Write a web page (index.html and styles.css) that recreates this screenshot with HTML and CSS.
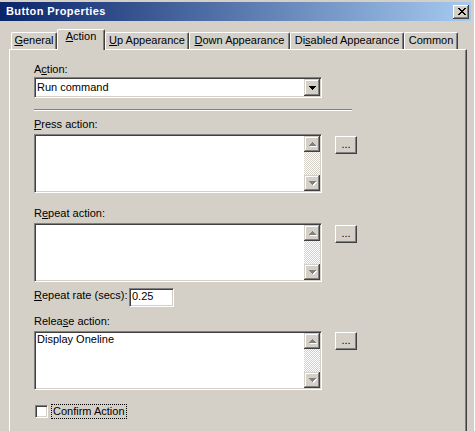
FILE: index.html
```html
<!DOCTYPE html>
<html>
<head>
<meta charset="utf-8">
<title>Button Properties</title>
<link rel="stylesheet" href="styles.css">
</head>
<body>
<div class="window">
  <div class="titlebar">
    <span class="title">Button Properties</span>
    <span class="close-btn">
      <svg width="8" height="7" viewBox="0 0 8 7" shape-rendering="crispEdges"><path fill="#000" d="M0 0h2v1H0zM6 0h2v1H6zM1 1h2v1H1zM5 1h2v1H5zM2 2h4v1H2zM3 3h2v1H3zM2 4h4v1H2zM1 5h2v1H1zM5 5h2v1H5zM0 6h2v1H0zM6 6h2v1H6z"/></svg>
    </span>
  </div>

  <div class="tabs">
    <div class="tab tab-general"><u>G</u>eneral</div>
    <div class="tab tab-action active"><u>A</u>ction</div>
    <div class="tab tab-up"><u>U</u>p Appearance</div>
    <div class="tab tab-down"><u>D</u>own Appearance</div>
    <div class="tab tab-disabled">Di<u>s</u>abled Appearance</div>
    <div class="tab tab-common">Common</div>
  </div>

  <div class="panel">
    <div class="label label-first">A<u>c</u>tion:</div>
    <div class="combo">
      <span class="combo-text">Run command</span>
      <span class="combo-btn">
        <svg width="7" height="4" viewBox="0 0 7 4" shape-rendering="crispEdges"><path fill="#000" d="M0 0h7v1H6v1H5v1H4v1H3V3H2V2H1V1H0z"/></svg>
      </span>
    </div>
    <div class="sep"></div>

    <div class="label label-after-sep"><u>P</u>ress action:</div>
    <div class="memo-row">
      <div class="memo">
        <div class="memo-text"></div>
        <div class="vscroll">
          <div class="sbtn"><svg width="8" height="5" viewBox="0 0 8 5" shape-rendering="crispEdges"><path fill="#fff" d="M4 1h1v1h1v1h1v1h1v1H1V4h1V3h1V2h1z"/><path fill="#808080" d="M3 0h1v1h1v1h1v1h1v1H0V3h1V2h1V1h1z"/></svg></div>
          <div class="track"></div>
          <div class="sbtn"><svg width="8" height="5" viewBox="0 0 8 5" shape-rendering="crispEdges"><path fill="#fff" d="M1 1h7v1H7v1H6v1H5v1H4V4H3V3H2V2H1z"/><path fill="#808080" d="M0 0h7v1H6v1H5v1H4v1H3V3H2V2H1V1H0z"/></svg></div>
        </div>
      </div>
      <div class="dots-btn dots-press">...</div>
    </div>

    <div class="label label-gap">R<u>e</u>peat action:</div>
    <div class="memo-row">
      <div class="memo">
        <div class="memo-text"></div>
        <div class="vscroll">
          <div class="sbtn"><svg width="8" height="5" viewBox="0 0 8 5" shape-rendering="crispEdges"><path fill="#fff" d="M4 1h1v1h1v1h1v1h1v1H1V4h1V3h1V2h1z"/><path fill="#808080" d="M3 0h1v1h1v1h1v1h1v1H0V3h1V2h1V1h1z"/></svg></div>
          <div class="track"></div>
          <div class="sbtn"><svg width="8" height="5" viewBox="0 0 8 5" shape-rendering="crispEdges"><path fill="#fff" d="M1 1h7v1H7v1H6v1H5v1H4V4H3V3H2V2H1z"/><path fill="#808080" d="M0 0h7v1H6v1H5v1H4v1H3V3H2V2H1V1H0z"/></svg></div>
        </div>
      </div>
      <div class="dots-btn dots-repeat">...</div>
    </div>

    <div class="rate-row">
      <span class="rate-label"><u>R</u>epeat rate (secs):</span>
      <span class="rate-input">0.25</span>
    </div>

    <div class="label label-release">Relea<u>s</u>e action:</div>
    <div class="memo-row">
      <div class="memo">
        <div class="memo-text">Display Oneline</div>
        <div class="vscroll">
          <div class="sbtn"><svg width="8" height="5" viewBox="0 0 8 5" shape-rendering="crispEdges"><path fill="#fff" d="M4 1h1v1h1v1h1v1h1v1H1V4h1V3h1V2h1z"/><path fill="#808080" d="M3 0h1v1h1v1h1v1h1v1H0V3h1V2h1V1h1z"/></svg></div>
          <div class="track"></div>
          <div class="sbtn"><svg width="8" height="5" viewBox="0 0 8 5" shape-rendering="crispEdges"><path fill="#fff" d="M1 1h7v1H7v1H6v1H5v1H4V4H3V3H2V2H1z"/><path fill="#808080" d="M0 0h7v1H6v1H5v1H4v1H3V3H2V2H1V1H0z"/></svg></div>
        </div>
      </div>
      <div class="dots-btn dots-release">...</div>
    </div>

    <div class="check-row">
      <span class="checkbox"></span>
      <span class="check-label">Confirm Action</span>
    </div>
  </div>
</div>
</body>
</html>
```

FILE: styles.css
```css
* {
  box-sizing: border-box;
}

html, body {
  margin: 0;
  padding: 0;
}

body {
  width: 475px;
  height: 431px;
  overflow: hidden;
  background: #d4d0c8;
  font-family: "Liberation Sans", Arial, sans-serif;
  font-size: 11px;
  line-height: 13px;
  color: #000;
}

u {
  text-decoration: underline;
  text-underline-offset: 1px;
}

.window {
  height: 431px;
  padding-top: 2px;
  padding-right: 3px;
  border-right: 1px solid #ffffff;
}

/* Title bar */
.titlebar {
  display: flex;
  align-items: center;
  height: 19px;
  padding: 0 2px 0 6px;
  background: linear-gradient(to right, #0a246a, #a6caf0);
  color: #fff;
  font-weight: bold;
}

.title {
  flex: 1;
  letter-spacing: 0.4px;
}

.close-btn {
  display: flex;
  align-items: center;
  justify-content: center;
  width: 16px;
  height: 14px;
  padding-left: 1px;
  background: #d4d0c8;
  box-shadow: inset -1px -1px #404040, inset 1px 1px #ffffff, inset -2px -2px #808080, inset 2px 2px #d4d0c8;
}

/* Tabs */
.tabs {
  display: flex;
  align-items: flex-end;
  height: 20px;
  margin-top: 8px;
  padding-left: 11px;
}

.tab {
  height: 17px;
  padding-top: 1px;
  text-align: center;
  white-space: nowrap;
  border-top: 1px solid #ffffff;
  border-left: 1px solid #ffffff;
  border-right: 1px solid #404040;
  border-top-left-radius: 2px;
  border-top-right-radius: 2px;
  box-shadow: inset -1px 0 #808080;
  background: #d4d0c8;
}

.tab.active {
  position: relative;
  z-index: 1;
  height: 21px;
  margin-bottom: -1px;
  padding-top: 0;
}

.tab-general { width: 46px; }
.tab-action { width: 48px; }
.tab-up { width: 84px; }
.tab-down { width: 101px; }
.tab-disabled { width: 114px; }
.tab-common { width: 54px; }

/* Panel */
.panel {
  width: 458px;
  height: 400px;
  margin-left: 9px;
  padding: 13px 0 0 24px;
  border-top: 1px solid #ffffff;
  border-left: 1px solid #ffffff;
  border-right: 1px solid #404040;
  box-shadow: inset -1px 0 #808080;
  display: flex;
  flex-direction: column;
  align-items: flex-start;
}

.label {
  height: 13px;
  white-space: nowrap;
}

.label-after-sep { margin-top: 7px; }
.label-gap { margin-top: 14px; }
.label-release { margin-top: 8px; }

/* Combo box */
.combo {
  display: flex;
  width: 288px;
  height: 21px;
  margin-top: 1px;
  padding: 1px;
  background: #fff;
  border: 1px solid;
  border-color: #808080 #ffffff #ffffff #808080;
  box-shadow: inset 1px 1px #404040, inset -1px -1px #d4d0c8;
}

.combo-text {
  flex: 1;
  padding: 2px 0 0 1px;
}

.combo-btn {
  display: flex;
  align-items: center;
  justify-content: center;
  width: 16px;
  height: 17px;
  background: #d4d0c8;
  box-shadow: inset -1px -1px #404040, inset 1px 1px #d4d0c8, inset -2px -2px #808080, inset 2px 2px #ffffff;
}

.sep {
  width: 318px;
  height: 2px;
  margin-top: 11px;
  border-top: 1px solid #808080;
  border-bottom: 1px solid #ffffff;
}

/* Multi-line edit boxes */
.memo-row {
  display: flex;
  align-items: flex-start;
  gap: 13px;
  margin-top: 3px;
}

.memo {
  display: flex;
  width: 288px;
  height: 59px;
  padding: 1px;
  background: #fff;
  border: 1px solid;
  border-color: #808080 #ffffff #ffffff #808080;
  box-shadow: inset 1px 1px #404040, inset -1px -1px #d4d0c8;
}

.memo-text {
  flex: 1;
  padding: 0 1px;
  white-space: nowrap;
}

.vscroll {
  display: flex;
  flex-direction: column;
  width: 16px;
}

.sbtn {
  display: flex;
  align-items: center;
  justify-content: center;
  height: 16px;
  flex: none;
  padding: 1px 0 0 1px;
  background: #d4d0c8;
  box-shadow: inset -1px -1px #404040, inset 1px 1px #d4d0c8, inset -2px -2px #808080, inset 2px 2px #ffffff;
}

.track {
  flex: 1;
  background: repeating-conic-gradient(#ffffff 0 25%, #d4d0c8 0 50%) 0 0 / 2px 2px;
}

.dots-btn {
  width: 22px;
  height: 18px;
  text-align: center;
  line-height: 15px;
  background: #d4d0c8;
  border: 1px solid;
  border-color: #ffffff #404040 #404040 #ffffff;
  box-shadow: inset -1px -1px #808080;
}

.dots-press { margin-top: 2px; }
.dots-repeat { margin-top: 2px; }
.dots-release { margin-top: 1px; }

/* Repeat rate */
.rate-row {
  display: flex;
  align-items: flex-start;
  margin-top: 6px;
}

.rate-label {
  width: 95px;
  padding-top: 1px;
  white-space: nowrap;
}

.rate-input {
  width: 45px;
  height: 19px;
  padding: 1px 2px;
  background: #fff;
  border: 1px solid;
  border-color: #808080 #ffffff #ffffff #808080;
  box-shadow: inset 1px 1px #404040, inset -1px -1px #d4d0c8;
}

/* Checkbox */
.check-row {
  display: flex;
  align-items: flex-start;
  margin-top: 15px;
  margin-left: 1px;
}

.checkbox {
  width: 13px;
  height: 13px;
  background: #fff;
  border: 1px solid;
  border-color: #808080 #ffffff #ffffff #808080;
  box-shadow: inset 1px 1px #404040, inset -1px -1px #d4d0c8;
}

.check-label {
  margin-left: 3px;
  margin-top: -1px;
  padding: 0 1px;
  height: 15px;
  border: 1px dotted #000;
}
```
